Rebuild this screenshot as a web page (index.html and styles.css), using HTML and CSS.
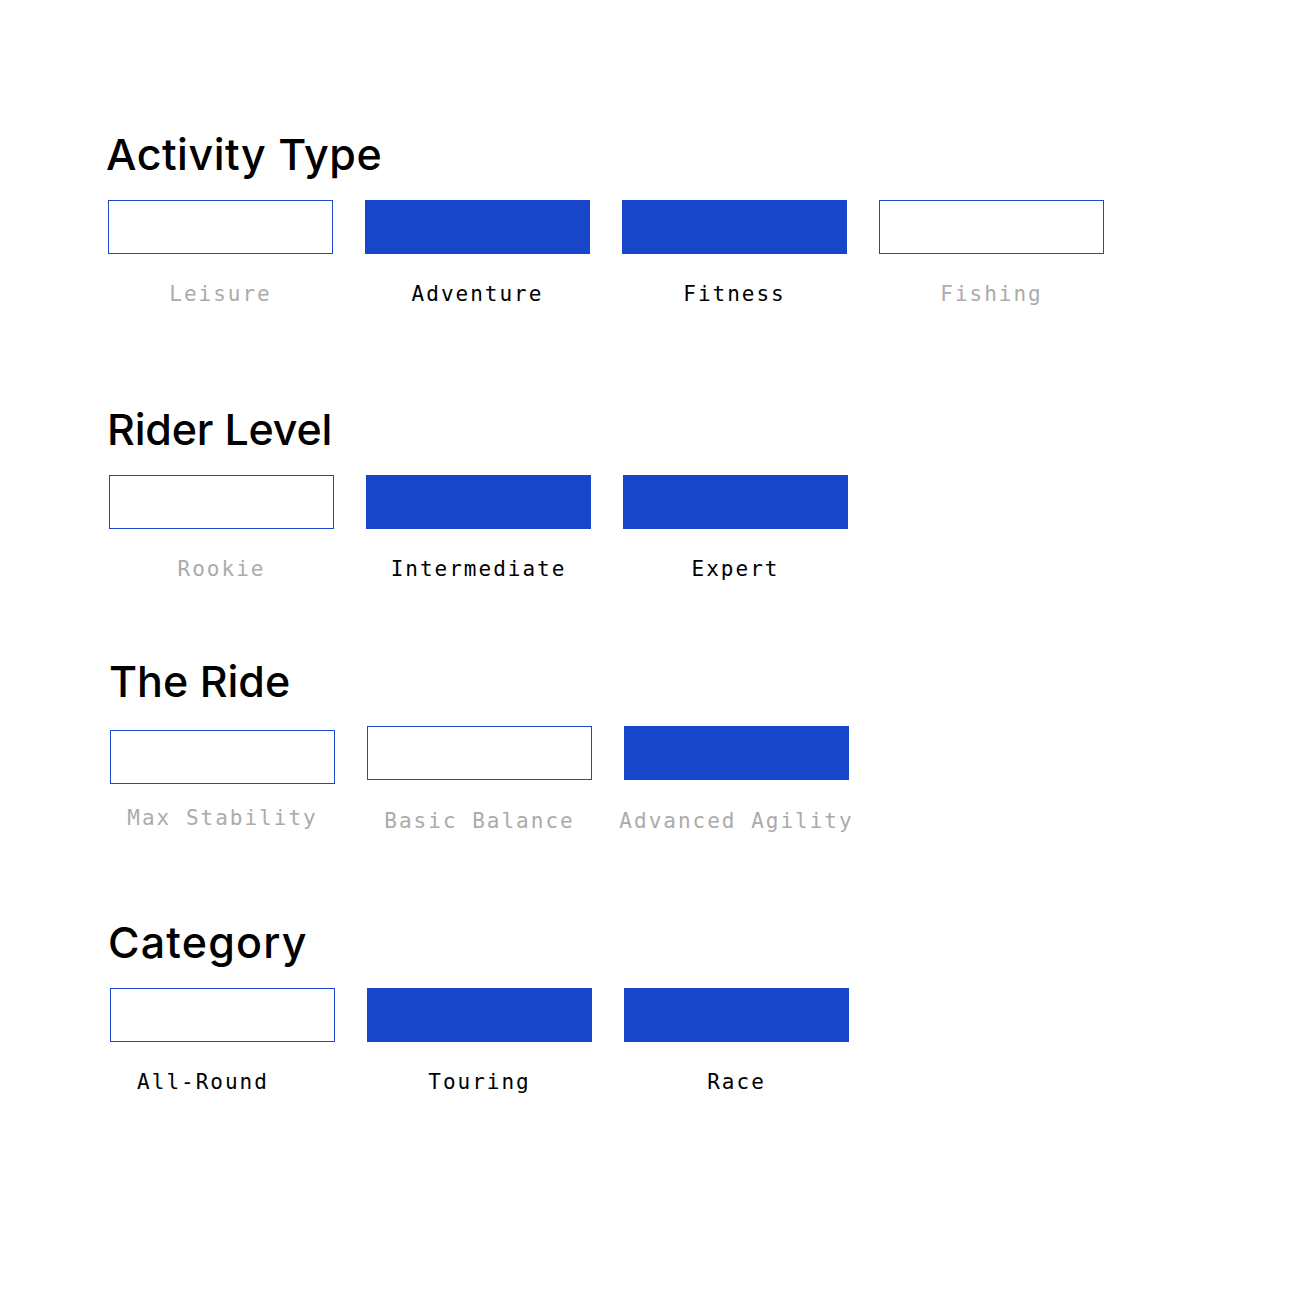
FILE: index.html
```html
<!DOCTYPE html>
<html lang="en">
<head>
<meta charset="utf-8">
<title>Ride Filters</title>
<link rel="stylesheet" href="styles.css">
</head>
<body>
<main class="page">
  <section class="group group--activity">
    <h2 class="group__title">Activity Type</h2>
    <ul class="options">
      <li class="option"><span class="option__box"></span><span class="option__label option__label--muted">Leisure</span></li>
      <li class="option option--on"><span class="option__box"></span><span class="option__label">Adventure</span></li>
      <li class="option option--on"><span class="option__box"></span><span class="option__label">Fitness</span></li>
      <li class="option"><span class="option__box"></span><span class="option__label option__label--muted">Fishing</span></li>
    </ul>
  </section>

  <section class="group group--level">
    <h2 class="group__title">Rider Level</h2>
    <ul class="options">
      <li class="option"><span class="option__box"></span><span class="option__label option__label--muted">Rookie</span></li>
      <li class="option option--on"><span class="option__box"></span><span class="option__label">Intermediate</span></li>
      <li class="option option--on"><span class="option__box"></span><span class="option__label">Expert</span></li>
    </ul>
  </section>

  <section class="group group--ride">
    <h2 class="group__title">The Ride</h2>
    <ul class="options">
      <li class="option option--lowered"><span class="option__box"></span><span class="option__label option__label--muted">Max Stability</span></li>
      <li class="option"><span class="option__box"></span><span class="option__label option__label--muted">Basic Balance</span></li>
      <li class="option option--on"><span class="option__box"></span><span class="option__label option__label--muted">Advanced Agility</span></li>
    </ul>
  </section>

  <section class="group group--category">
    <h2 class="group__title">Category</h2>
    <ul class="options">
      <li class="option"><span class="option__box"></span><span class="option__label option__label--offset">All-Round</span></li>
      <li class="option option--on"><span class="option__box"></span><span class="option__label">Touring</span></li>
      <li class="option option--on"><span class="option__box"></span><span class="option__label">Race</span></li>
    </ul>
  </section>
</main>
</body>
</html>
```

FILE: styles.css
```css
* {
  box-sizing: border-box;
}

html,
body {
  margin: 0;
  padding: 0;
  background: #ffffff;
}

.page {
  padding: 128px 0 0 108px;
  font-family: Inter, "Liberation Sans", sans-serif;
  color: #000000;
}

.group__title {
  margin: 0 0 0 -2px;
  font-family: Inter, "Liberation Sans", sans-serif;
  font-size: 43px;
  font-weight: 500;
  line-height: 52px;
  letter-spacing: 0.5px;
  color: #000000;
}

.options {
  display: flex;
  gap: 32px;
  margin: 20px 0 0;
  padding: 0;
  list-style: none;
}

.option {
  width: 225px;
  display: flex;
  flex-direction: column;
  align-items: center;
}

.option__box {
  display: block;
  align-self: stretch;
  height: 54px;
  border: 1px solid #1c48cf;
  background: #ffffff;
}

.option--on .option__box {
  background: #1846cb;
  border-color: #1846cb;
}

.option__label {
  display: block;
  margin-top: 26px;
  font-family: "DejaVu Sans Mono", "Liberation Mono", monospace;
  font-size: 21px;
  line-height: 28px;
  letter-spacing: 2px;
  white-space: nowrap;
  text-align: center;
  color: #000000;
}

.option__label--muted {
  color: #ababab;
}

.option__label--offset {
  margin-right: 39px;
}

.group--level {
  margin-top: 95px;
  padding-left: 1px;
}

.group--level .group__title {
  letter-spacing: -0.2px;
}

.group--ride {
  margin-top: 72px;
  padding-left: 2px;
}

.group--ride .group__title {
  margin-left: -1px;
  letter-spacing: 0;
}

.group--ride .options {
  margin-top: 19px;
}

.group--ride .option--lowered .option__box {
  margin-top: 4px;
}

.group--ride .option--lowered .option__label {
  margin-top: 20px;
}

.group--ride .option:not(.option--lowered) .option__label {
  margin-top: 27px;
}

.group--category {
  margin-top: 81px;
  padding-left: 2px;
}

.group--category .group__title {
  letter-spacing: 1.2px;
}
```
